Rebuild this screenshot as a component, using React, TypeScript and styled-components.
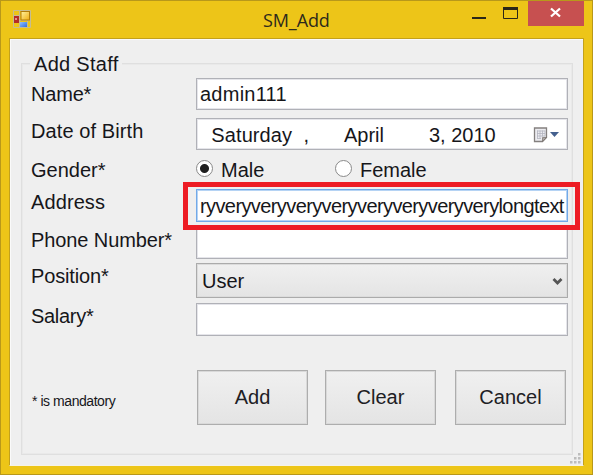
import React from "react";
import styled, { createGlobalStyle } from "styled-components";

const GlobalStyle = createGlobalStyle`
  html, body { margin: 0; padding: 0; overflow: hidden; }
  * { box-sizing: border-box; }
`;

const Window = styled.div`
  width: 593px;
  height: 475px;
  display: flex;
  flex-direction: column;
  background: #edc518;
  border: 1px solid #b8981a;
  font-family: "Liberation Sans", Arial, sans-serif;
  font-size: 20px;
  line-height: 24px;
  color: #16161a;
`;

const TitleBar = styled.header`
  display: grid;
  grid-template-columns: 262px 1fr auto;
  height: 37px;
  padding-right: 8px;
`;

const AppIcon = styled.svg`
  display: block;
  margin: 9px 0 0 12px;
`;

const Title = styled.h1`
  margin: 6px 0 0;
  font: 400 18px/26px "Open Sans", "Noto Sans", sans-serif;
  letter-spacing: -0.1px;
  color: #2d2a1c;
  white-space: nowrap;
`;

const WindowControls = styled.div`
  display: flex;
  height: 25px;
`;

const ControlButton = styled.button<{ $width: number; $close?: boolean }>`
  width: ${(p) => p.$width}px;
  height: 25px;
  padding: 0;
  border: 0;
  background: ${(p) => (p.$close ? "#c75050" : "transparent")};
  svg { display: block; }
`;

const Client = styled.main`
  position: relative;
  width: 575px;
  height: 428px;
  margin-left: 8px;
  padding: 24px 11px 0;
  background: #efefef;
  border: 1px solid #c3a11a;
  border-bottom-color: #f6f3e6;
  box-shadow: inset 1px 1px 0 #fafafa;
`;

const GroupBox = styled.section`
  position: relative;
  width: 552px;
  height: 392px;
  padding: 14px 0 0 9px;
  border: 1px solid #dfdfdf;
  box-shadow: inset 0 0 0 1px #e9e9e9;
`;

const Legend = styled.h2`
  position: absolute;
  left: 8px;
  top: -12px;
  margin: 0;
  padding: 0 3px 0 4px;
  background: #efefef;
  font-size: 20px;
  font-weight: 400;
  line-height: 24px;
  letter-spacing: 0.3px;
  white-space: nowrap;
`;

const Row = styled.div<{ $height: number; $gap?: number }>`
  display: grid;
  grid-template-columns: 165px 372px;
  height: ${(p) => p.$height}px;
  margin-top: ${(p) => p.$gap ?? 0}px;
`;

const Label = styled.label<{ $drop?: number; $tracking?: number }>`
  margin-top: ${(p) => p.$drop ?? 1}px;
  height: 24px;
  letter-spacing: ${(p) => p.$tracking ?? 0}px;
  white-space: nowrap;
`;

const Field = styled.div<{ $focused?: boolean }>`
  display: flex;
  min-width: 0;
  padding-left: 3px;
  background: #fff;
  border: 1px solid ${(p) => (p.$focused ? "#72a9e8" : "#b0b1b7")};
  box-shadow: inset 0 0 0 1px ${(p) => (p.$focused ? "#b5d3f4" : "#e5e5ea")};
  white-space: pre;
`;

const FieldText = styled.span<{ $width?: number; $tracking?: number; $drop?: number }>`
  flex: none;
  margin-top: ${(p) => p.$drop ?? 4}px;
  width: ${(p) => (p.$width ? `${p.$width}px` : "auto")};
  letter-spacing: ${(p) => p.$tracking ?? 0}px;
`;

const Highlight = styled.div`
  position: absolute;
  left: 161px;
  top: 118px;
  width: 397px;
  height: 48px;
  border: 5px solid #ed1c24;
  pointer-events: none;
`;

const CalendarIcon = styled.svg`
  margin: 8px 0 0 auto;
  display: block;
`;

const RadioGroup = styled.div`
  display: grid;
  grid-template-columns: 139px auto;
`;

const RadioOption = styled.label`
  display: flex;
  gap: 8px;
`;

const RadioDot = styled.span<{ $checked?: boolean }>`
  width: 17px;
  height: 17px;
  margin-top: 2px;
  border: 1px solid #8a8a8a;
  border-radius: 50%;
  background: ${(p) =>
    p.$checked ? "radial-gradient(circle, #202020 0 4px, #fff 5px)" : "#fff"};
`;

const Select = styled.div`
  display: flex;
  justify-content: space-between;
  padding: 5px 4px 0 5px;
  border: 1px solid #ababab;
  box-shadow: inset 0 0 0 1px #dcdcdc;
  background: linear-gradient(#f0f0f0, #e4e4e4);
`;

const Chevron = styled.svg`
  margin-top: 8px;
`;

const Footer = styled.footer`
  display: grid;
  grid-template-columns: 166px 111px 111px 111px;
  height: 55px;
  margin-top: 34px;
`;

const Note = styled.p`
  margin: 19px 0 0 1px;
  font-size: 14px;
  letter-spacing: -0.45px;
  white-space: nowrap;
`;

const PushButton = styled.button<{ $shift?: number }>`
  margin-left: ${(p) => p.$shift ?? 0}px;
  width: 111px;
  height: 55px;
  padding: 0 0 1px;
  font: inherit;
  color: #202024;
  border: 1px solid #adadad;
  box-shadow: inset 0 0 0 1px #d9d9d9;
  background: linear-gradient(#f0f0f0, #e4e4e4);
`;

const ResizeGrip = styled.svg`
  position: absolute;
  right: 2px;
  bottom: 1px;
`;

const GRIP_DOTS = [[8, 0], [4, 4], [8, 4], [0, 8], [4, 8], [8, 8]];

export default function App() {
  return (
    <>
      <GlobalStyle />
      <Window>
        <TitleBar>
          <AppIcon width="18" height="18" viewBox="0 0 18 18">
            <defs>
              <linearGradient id="gold" x2="1" y2="1">
                <stop stopColor="#fff3a0" />
                <stop offset="1" stopColor="#f0ae12" />
              </linearGradient>
              <linearGradient id="blue" x2="1" y2="1">
                <stop stopColor="#8fc0ff" />
                <stop offset="1" stopColor="#2f6ddf" />
              </linearGradient>
            </defs>
            <path d="M.5 .5h17v17H.5zM.5 5.500h7M.5 12.500h7M6.500 .5v17M7 10.500h10.500M14.500 10v7" fill="none" stroke="#c6bd91" />
            <rect x="1" y="6" width="5" height="7" fill="#b52b26" />
            <rect x="2" y="8" width="2" height="2" fill="#e69289" />
            <rect x="8" y="1.500" width="8.500" height="8.500" fill="url(#gold)" stroke="#b37d0b" />
            <rect x="7" y="12" width="7" height="5" fill="url(#blue)" />
          </AppIcon>
          <Title>SM_Add</Title>
          <WindowControls>
            <ControlButton $width={30} aria-label="Minimize">
              <svg width="30" height="25"><path d="M5 17h14" stroke="#2a2718" strokeWidth="2" /></svg>
            </ControlButton>
            <ControlButton $width={31} aria-label="Maximize">
              <svg width="31" height="25">
                <path d="M6.500 7.500h14v10h-14z" fill="none" stroke="#2a2718" />
                <path d="M6 7.500h15" stroke="#2a2718" strokeWidth="3" />
              </svg>
            </ControlButton>
            <ControlButton $width={56} $close aria-label="Close">
              <svg width="56" height="25"><path d="M23 7.500l9 8M32 7.500l-9 8" stroke="#fff" strokeWidth="2.300" /></svg>
            </ControlButton>
          </WindowControls>
        </TitleBar>
        <Client>
          <GroupBox>
            <Legend>Add Staff</Legend>
            <Row $height={32}>
              <Label $drop={4} $tracking={-0.2}>Name*</Label>
              <Field><FieldText $drop={3} $tracking={0.25}>admin111</FieldText></Field>
            </Row>
            <Row $height={32} $gap={8}>
              <Label $tracking={0.1}>Date of Birth</Label>
              <Field>
                <FieldText $width={98} $tracking={0.1}>{"  Saturday"}</FieldText>
                <FieldText $width={46}>{" ,"}</FieldText>
                <FieldText $width={85}>April</FieldText>
                <FieldText>3, 2010</FieldText>
                <CalendarIcon width="34" height="16" viewBox="0 0 34 16">
                  <path d="M1.500 1h12v9.500l-4 4h-8z" fill="#ececf0" stroke="#84807f" strokeWidth="1.300" />
                  <path d="M4 4h8M4 6.500h8M4 9h8M4 11.500h4M4.500 3.500v8M7 3.500v8M9.500 3.500v6M12 3.500v6" stroke="#b4b5c0" strokeWidth=".8" />
                  <path d="M9.500 14.500v-4h4z" fill="#aaa5a3" stroke="#77706c" strokeWidth=".7" />
                  <path d="M17 5h9l-4.500 5z" fill="#44608e" />
                </CalendarIcon>
              </Field>
            </Row>
            <Row $height={23} $gap={8}>
              <Label $drop={0}>Gender*</Label>
              <RadioGroup>
                <RadioOption><RadioDot $checked />Male</RadioOption>
                <RadioOption><RadioDot />Female</RadioOption>
              </RadioGroup>
            </Row>
            <Row $height={33} $gap={8}>
              <Label $tracking={0.1}>Address</Label>
              <Field $focused>
                <FieldText $tracking={-0.6} $drop={4}>ryveryveryveryveryveryveryveryverylongtext</FieldText>
              </Field>
            </Row>
            <Row $height={32} $gap={5}>
              <Label $tracking={-0.1}>Phone Number*</Label>
              <Field />
            </Row>
            <Row $height={35} $gap={4}>
              <Label $tracking={-0.15}>Position*</Label>
              <Select>
                User
                <Chevron width="11" height="9" viewBox="0 0 11 9">
                  <path d="M1.500 2l4 4 4-4" fill="none" stroke="#555" strokeWidth="2.800" />
                </Chevron>
              </Select>
            </Row>
            <Row $height={33} $gap={5}>
              <Label $tracking={-0.3}>Salary*</Label>
              <Field />
            </Row>
            <Footer>
              <Note>* is mandatory</Note>
              <PushButton>Add</PushButton>
              <PushButton $shift={17}>Clear</PushButton>
              <PushButton $shift={36}>Cancel</PushButton>
            </Footer>
            <Highlight />
          </GroupBox>
          <ResizeGrip width="11" height="11">
            {GRIP_DOTS.map(([x, y]) => (
              <rect key={`${x}-${y}`} x={x} y={y} width="2.500" height="2.500" fill="#bcbcbc" />
            ))}
          </ResizeGrip>
        </Client>
      </Window>
    </>
  );
}
